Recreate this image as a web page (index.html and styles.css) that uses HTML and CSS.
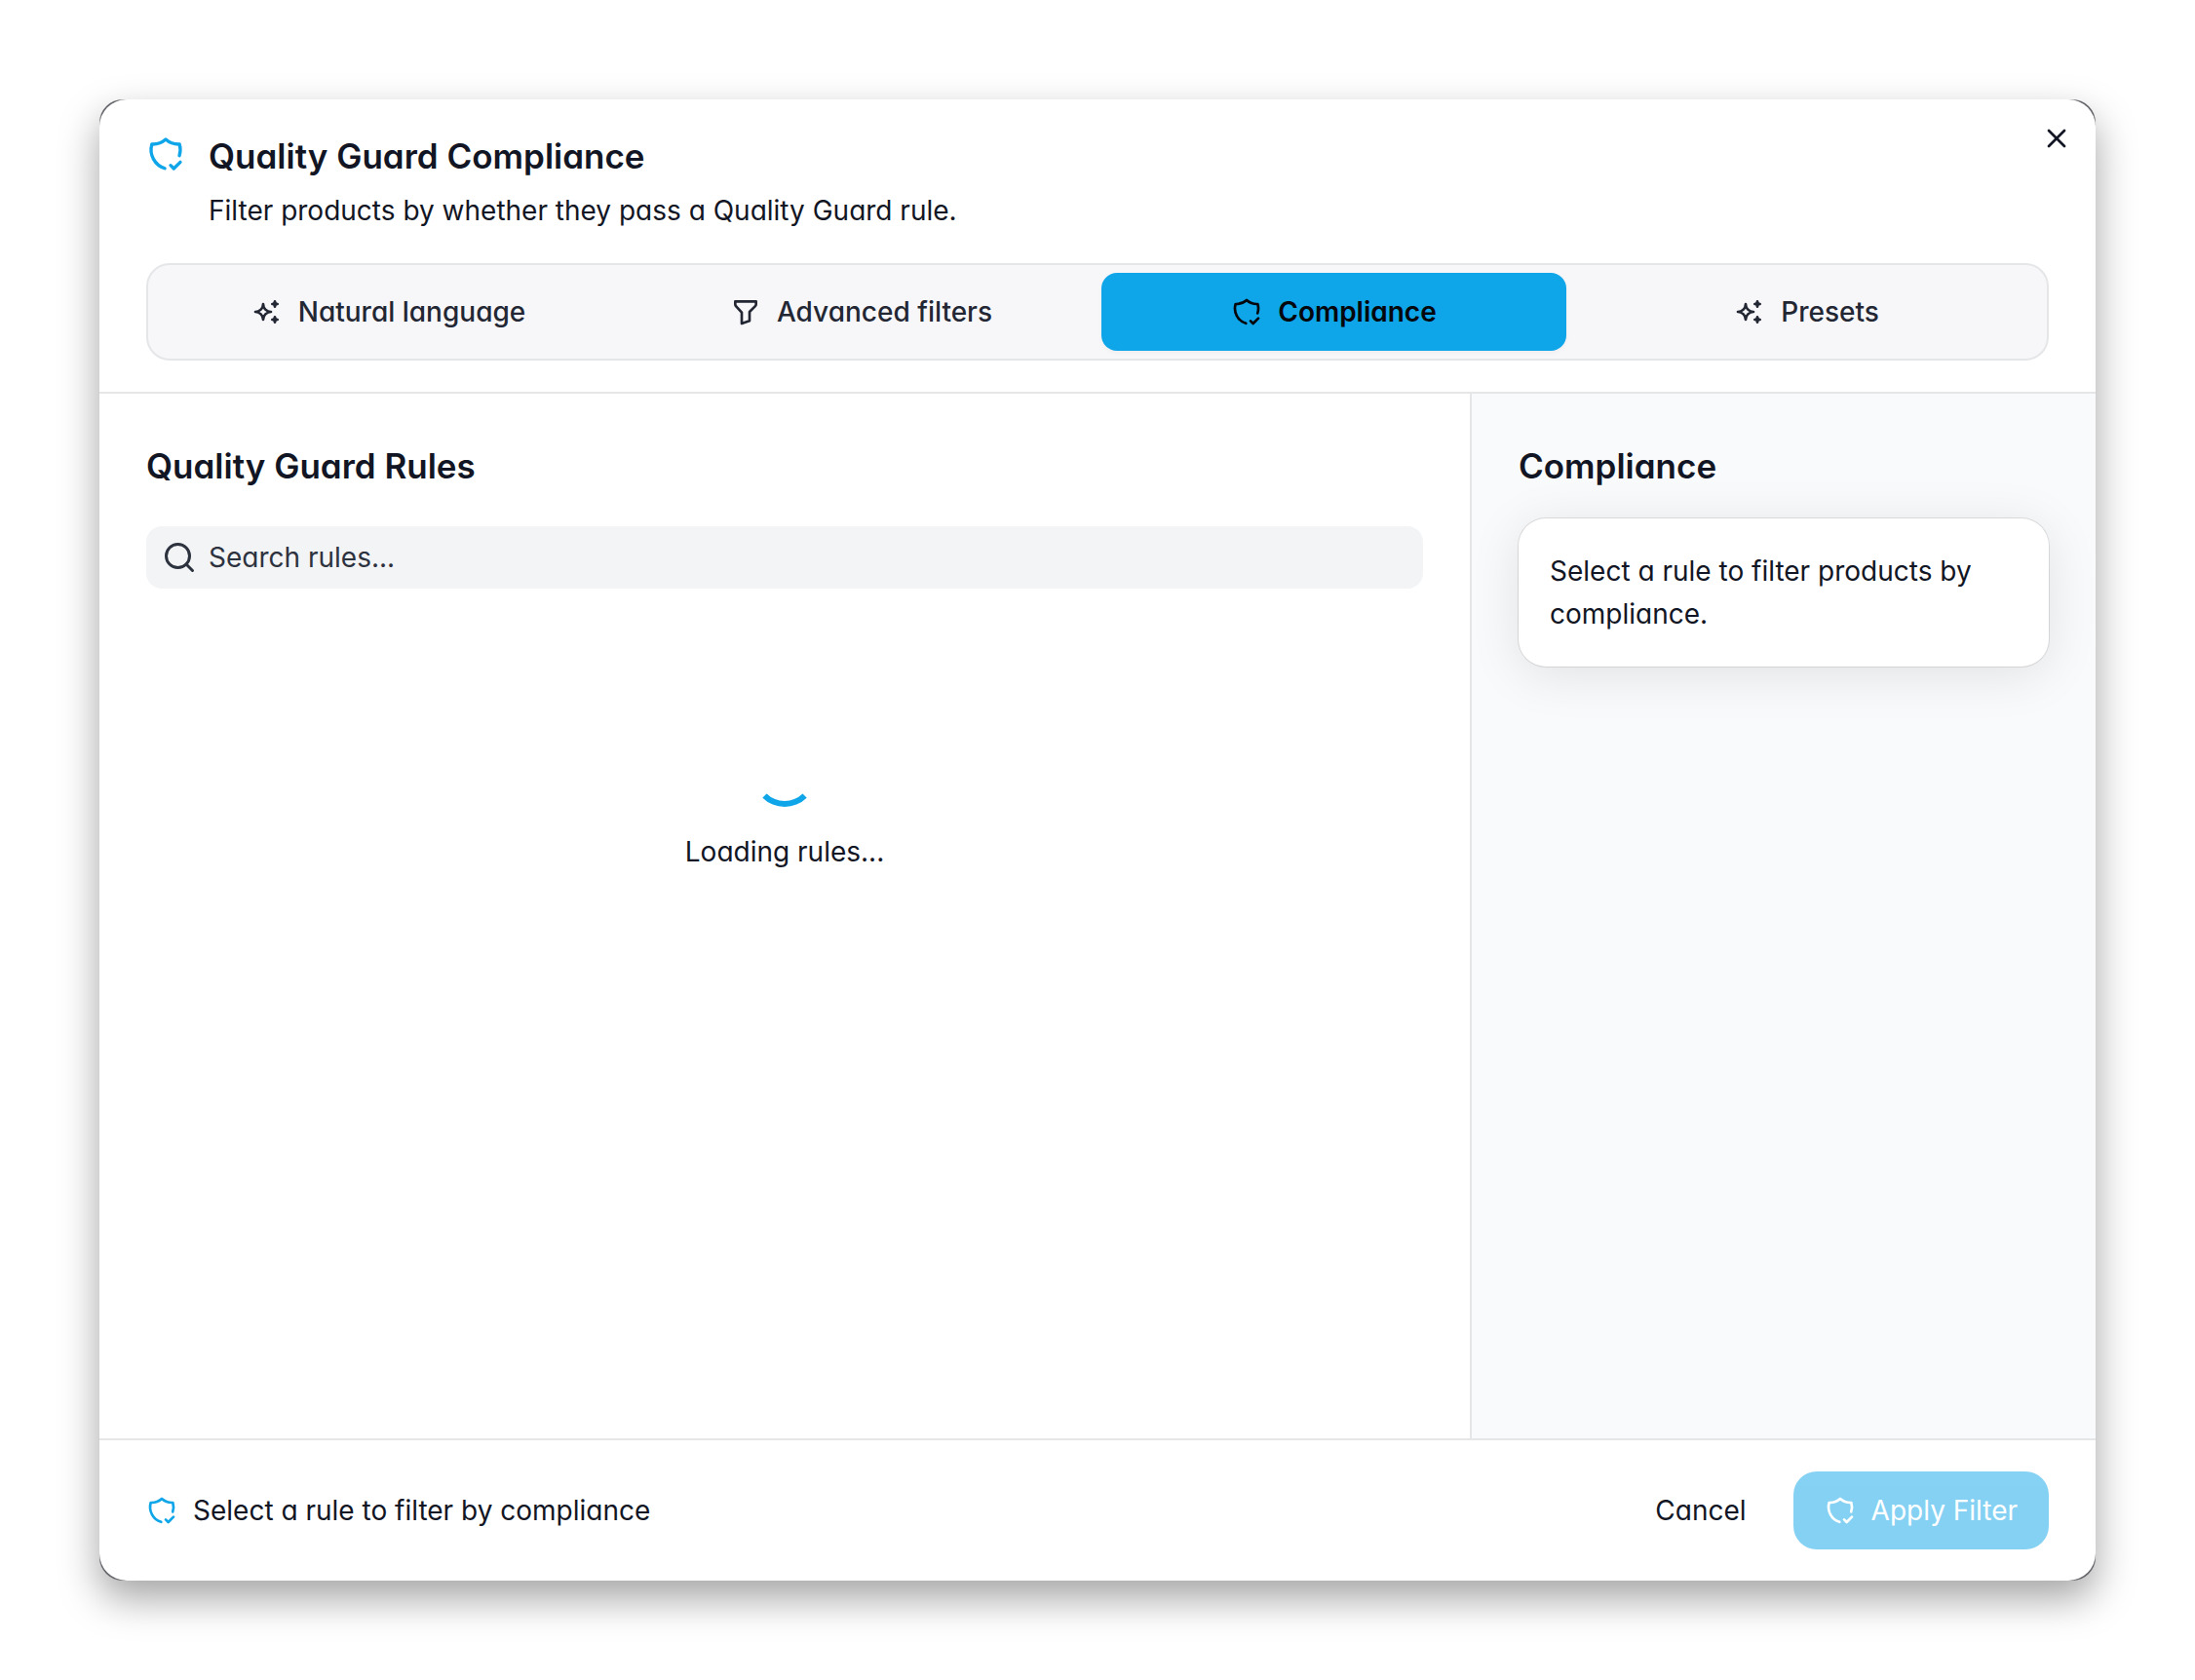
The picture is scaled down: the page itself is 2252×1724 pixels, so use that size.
FILE: index.html
```html
<!DOCTYPE html>
<html lang="en">
<head>
  <meta charset="UTF-8">
  <title>Quality Guard Compliance</title>
  <meta name="viewport" content="width=device-width, initial-scale=1">
  <link rel="stylesheet" href="styles.css">
</head>
<body>
  <!-- Icon sprite -->
  <svg class="sprite" aria-hidden="true">
    <symbol id="icon-shield" viewBox="0 0 24 24">
      <path d="M11.46 20.846a12 12 0 0 1 -7.96 -14.846a12 12 0 0 0 8.5 -3a12 12 0 0 0 8.5 3a12 12 0 0 1 -.09 7.06"/>
      <path d="M15 19l2 2l4 -4"/>
    </symbol>
    <symbol id="icon-sparkles" viewBox="0 0 24 24">
      <path d="M16 18a2 2 0 0 1 2 2a2 2 0 0 1 2 -2a2 2 0 0 1 -2 -2a2 2 0 0 1 -2 2zm0 -12a2 2 0 0 1 2 2a2 2 0 0 1 2 -2a2 2 0 0 1 -2 -2a2 2 0 0 1 -2 2zm-7 12a6 6 0 0 1 6 -6a6 6 0 0 1 -6 -6a6 6 0 0 1 -6 6a6 6 0 0 1 6 6z"/>
    </symbol>
    <symbol id="icon-filter" viewBox="0 0 24 24">
      <path d="M4 4h16v2.172a2 2 0 0 1 -.586 1.414l-4.414 4.414v7l-6 2v-8.5l-4.48 -4.928a2 2 0 0 1 -.52 -1.345v-2.227z"/>
    </symbol>
    <symbol id="icon-search" viewBox="0 0 24 24">
      <circle cx="11" cy="11" r="8"/>
      <path d="M21 21l-4.3 -4.3"/>
    </symbol>
    <symbol id="icon-close" viewBox="0 0 24 24">
      <path d="M18 6l-12 12"/>
      <path d="M6 6l12 12"/>
    </symbol>
  </svg>

  <div class="window">
    <div class="dialog" role="dialog" aria-labelledby="dialogTitle">
      <button class="close-button" type="button" aria-label="Close">
        <svg class="icon"><use href="#icon-close"/></svg>
      </button>

      <header class="dialog-header">
        <div class="heading">
          <svg class="icon icon-large icon-primary"><use href="#icon-shield"/></svg>
          <div class="heading-text">
            <h1 class="title" id="dialogTitle">Quality Guard Compliance</h1>
            <p class="subtitle">Filter products by whether they pass a Quality Guard rule.</p>
          </div>
        </div>

        <div class="tabs" role="tablist">
          <button class="tab" type="button" role="tab">
            <svg class="icon"><use href="#icon-sparkles"/></svg>
            Natural language
          </button>
          <button class="tab" type="button" role="tab">
            <svg class="icon"><use href="#icon-filter"/></svg>
            Advanced filters
          </button>
          <button class="tab active" type="button" role="tab" aria-selected="true">
            <svg class="icon"><use href="#icon-shield"/></svg>
            Compliance
          </button>
          <button class="tab" type="button" role="tab">
            <svg class="icon"><use href="#icon-sparkles"/></svg>
            Presets
          </button>
        </div>
      </header>

      <div class="dialog-body">
        <main class="rules">
          <h2 class="title">Quality Guard Rules</h2>
          <label class="search">
            <svg class="icon icon-search"><use href="#icon-search"/></svg>
            <input class="search-input" type="text" placeholder="Search rules..." aria-label="Search rules">
          </label>
          <div class="loading">
            <div class="spinner"></div>
            <p>Loading rules...</p>
          </div>
        </main>

        <aside class="summary">
          <h2 class="title">Compliance</h2>
          <div class="card">
            <p>Select a rule to filter products by compliance.</p>
          </div>
        </aside>
      </div>

      <footer class="dialog-footer">
        <div class="status">
          <svg class="icon icon-primary"><use href="#icon-shield"/></svg>
          <span>Select a rule to filter by compliance</span>
        </div>
        <div class="actions">
          <button class="button" type="button">Cancel</button>
          <button class="button button-primary" type="button" disabled>
            <svg class="icon"><use href="#icon-shield"/></svg>
            Apply Filter
          </button>
        </div>
      </footer>
    </div>
  </div>
</body>
</html>
```
FILE: styles.css
```css
:root {
  --primary-color: #0ea5e9;
  --text-color: #121624;
  --border-color: #e5e6e8;
}
* { margin: 0; padding: 0; box-sizing: border-box; }
body {
  min-height: 100vh;
  display: flex;
  padding: 102px;
  background: #fff;
  color: var(--text-color);
  font-family: Inter, "Liberation Sans", sans-serif;
  font-feature-settings: "cv11";
  font-size: 28px;
  line-height: 44px;
}
button, input {
  font: inherit;
  font-feature-settings: inherit;
  color: inherit;
  border: none;
  background: none;
}
button {
  cursor: pointer;
}
.sprite {
  position: absolute;
  width: 0;
  height: 0;
}
.icon {
  width: 32px;
  height: 32px;
  flex-shrink: 0;
  fill: none;
  stroke: currentColor;
  stroke-width: 2;
  stroke-linecap: round;
  stroke-linejoin: round;
}
.icon-large {
  width: 40px;
  height: 40px;
  margin-top: 4px;
}
.icon-primary {
  color: var(--primary-color);
}

/* Dialog */
.window {
  flex: 1;
  display: flex;
  background: #66676c;
  border-radius: 24px;
  box-shadow: 0 18px 40px rgba(0,0,0,0.36);
}
.dialog {
  position: relative;
  flex: 1;
  display: flex;
  flex-direction: column;
  background: #fff;
  border-radius: 28px;
}
.close-button {
  position: absolute;
  top: 24px;
  right: 24px;
  display: flex;
}
.dialog-header {
  padding: 32px 48px;
  border-bottom: 2px solid var(--border-color);
}
.heading {
  display: flex;
  gap: 24px;
  margin-bottom: 32px;
}
.title {
  font-size: 35px;
  line-height: 52px;
  font-weight: 600;
}
.subtitle {
  margin-top: 8px;
}

/* Tabs */
.tabs {
  display: grid;
  grid-template-columns: repeat(4, 1fr);
  gap: 8px;
  padding: 8px;
  background: #f7f7fa;
  border: 2px solid var(--border-color);
  border-radius: 24px;
}
.tab {
  display: flex;
  align-items: center;
  justify-content: center;
  gap: 16px;
  height: 80px;
  border-radius: 16px;
  font-weight: 500;
  color: #232734;
}
.tab.active {
  background: var(--primary-color);
  color: #05070c;
  font-weight: 600;
  box-shadow: 0 2px 4px rgba(0,0,0,0.04);
}

/* Body */
.dialog-body {
  flex: 1;
  display: flex;
}
.rules {
  flex: 1;
  padding: 48px;
  border-right: 2px solid var(--border-color);
}
.search {
  display: flex;
  align-items: center;
  gap: 12px;
  height: 64px;
  margin-top: 36px;
  padding: 0 16px;
  background: #f3f4f6;
  border-radius: 16px;
  color: #2d323f;
}
.icon-search {
  width: 36px;
  height: 36px;
}
.search-input {
  flex: 1;
  outline: none;
}
.search-input::placeholder {
  color: #2d323f;
  opacity: 1;
}
.loading {
  display: flex;
  flex-direction: column;
  align-items: center;
  gap: 24px;
  padding: 160px 0;
}
.spinner {
  width: 64px;
  height: 64px;
  border: 6px solid transparent;
  border-bottom-color: var(--primary-color);
  border-radius: 50%;
}
.summary {
  width: 640px;
  padding: 48px;
  background: #f9fafc;
}
.card {
  margin-top: 28px;
  padding: 32px;
  background: #fff;
  border-radius: 28px;
  box-shadow: 0 0 0 1px rgba(0,0,0,0.1), 0 8px 52px rgba(0,0,0,0.1);
}

/* Footer */
.dialog-footer {
  display: flex;
  align-items: center;
  justify-content: space-between;
  padding: 32px 48px;
  border-top: 2px solid var(--border-color);
}
.status, .actions {
  display: flex;
  align-items: center;
  gap: 16px;
}
.button {
  display: flex;
  align-items: center;
  gap: 16px;
  height: 80px;
  padding: 0 32px;
  border-radius: 24px;
}
.button-primary {
  background: var(--primary-color);
  color: #fff;
  opacity: 0.5;
}
```
